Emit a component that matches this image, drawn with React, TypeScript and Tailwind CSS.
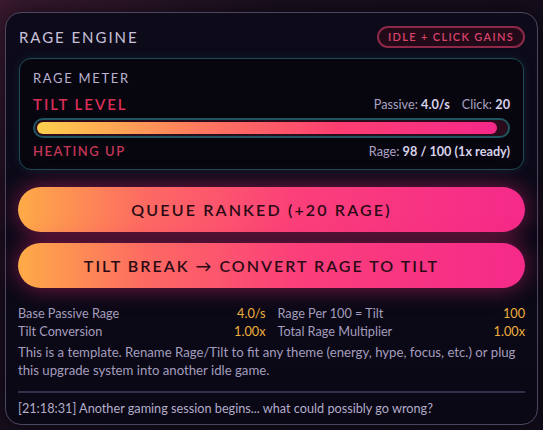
import React from 'react'

type Stat = { label: string; value: string }

const stats: Stat[] = [
  { label: 'Base Passive Rage', value: '4.0/s' },
  { label: 'Rage Per 100 = Tilt', value: '100' },
  { label: 'Tilt Conversion', value: '1.00x' },
  { label: 'Total Rage Multiplier', value: '1.00x' },
]

export default function App() {
  const rage = 98
  const max = 100

  return (
    <div
      className="w-[543px] h-[430px] overflow-hidden bg-[radial-gradient(circle_at_0%_0%,#3a1a30_0%,#1a1020_40%,#120c1a_100%)] pt-3 px-[5px]"
      style={{ fontFamily: 'Lato, "Open Sans", sans-serif' }}
    >
      <div className="h-[413px] rounded-[16px] border border-[#4c4662] bg-[linear-gradient(180deg,#0d0b1a_0%,#0a0815_100%)] px-3 pt-[13px] shadow-[0_0_24px_rgba(0,0,0,0.6)]">
        {/* header */}
        <div className="flex items-center justify-between h-[22px]">
          <div className="text-[15px] tracking-[0.13em] text-[#c9c2dc] pl-px">RAGE ENGINE</div>
          <div className="h-[22px] px-[9px] flex items-center rounded-full border-2 border-[#8e2848] bg-[#220a18] text-[11px] font-semibold tracking-[0.12em] text-[#d9436c]">
            IDLE + CLICK GAINS
          </div>
        </div>

        {/* meter */}
        <div className="mt-[10px] mx-px h-[112px] rounded-[12px] border border-[#1e4b56] bg-[#07060f] px-[13px] pt-[11px] shadow-[0_0_10px_rgba(30,90,110,0.25)]">
          <div className="text-[13px] tracking-[0.13em] text-[#b9b1d2] leading-[16px]">RAGE METER</div>
          <div className="mt-[9px] flex items-end justify-between leading-[18px]">
            <div className="text-[15px] font-semibold tracking-[0.13em] text-[#d92e58]">TILT LEVEL</div>
            <div className="text-[12.7px] text-[#a9a2c2]">
              Passive: <span className="font-bold text-[#d8d2ea]">4.0/s</span>
              <span className="ml-[12px]">Click: </span>
              <span className="font-bold text-[#d8d2ea]">20</span>
            </div>
          </div>
          <div className="mt-[5px] h-[20px] rounded-full border-2 border-[#1d5560] bg-[#2a0d1c] p-[2px]">
            <div
              className="h-full rounded-full bg-[linear-gradient(90deg,#fdd04c_0%,#fe7a5e_35%,#fb3f72_65%,#f5288a_100%)]"
              style={{ width: `${(rage / max) * 100}%` }}
            />
          </div>
          <div className="mt-[4px] flex items-center justify-between leading-[18px]">
            <div className="text-[13px] font-semibold tracking-[0.12em] text-[#c33658]">HEATING UP</div>
            <div className="text-[12.7px] text-[#a9a2c2]">
              Rage: <span className="font-bold text-[#d8d2ea]">98 / 100 (1x ready)</span>
            </div>
          </div>
        </div>

        {/* actions */}
        <div className="mt-[17px] flex flex-col gap-[11px]">
          <button className="h-[45px] w-full pr-[20px] rounded-full bg-[linear-gradient(90deg,#fdab48_0%,#fd6a62_25%,#fb3f7a_55%,#f52a8a_100%)] text-[16px] font-semibold tracking-[0.135em] text-[#2a0a14] shadow-[0_0_22px_rgba(240,40,120,0.5)]">
            QUEUE RANKED (+20 RAGE)
          </button>
          <button className="h-[45px] w-full pr-[20px] rounded-full bg-[linear-gradient(90deg,#fdab48_0%,#fd6a62_25%,#fb3f7a_55%,#f52a8a_100%)] text-[16px] font-semibold tracking-[0.125em] text-[#2a0a14] shadow-[0_0_22px_rgba(240,40,120,0.5)]">
            TILT BREAK → CONVERT RAGE TO TILT
          </button>
        </div>

        {/* stats */}
        <div className="mt-[16px] grid grid-cols-2 gap-x-3 text-[12.7px] leading-[18px]">
          {stats.map(s => (
            <div key={s.label} className="flex justify-between">
              <span className="text-[#a49dbd]">{s.label}</span>
              <span className="text-[#eeae3c]">{s.value}</span>
            </div>
          ))}
        </div>

        <p className="mt-[3px] text-[13.2px] leading-[18px] text-[#a49dbd]">
          <span className="block whitespace-nowrap">
            This is a template. Rename Rage/Tilt to fit any theme (energy, hype, focus, etc.) or plug
          </span>
          this upgrade system into another idle game.
        </p>

        <div className="mt-[12px] h-[2px] bg-[#34304a]" />
        <div className="mt-[6px] text-[12.7px] leading-[18px] text-[#b3acc9]">
          [21:18:31] Another gaming session begins... what could possibly go wrong?
        </div>
      </div>
    </div>
  )
}
